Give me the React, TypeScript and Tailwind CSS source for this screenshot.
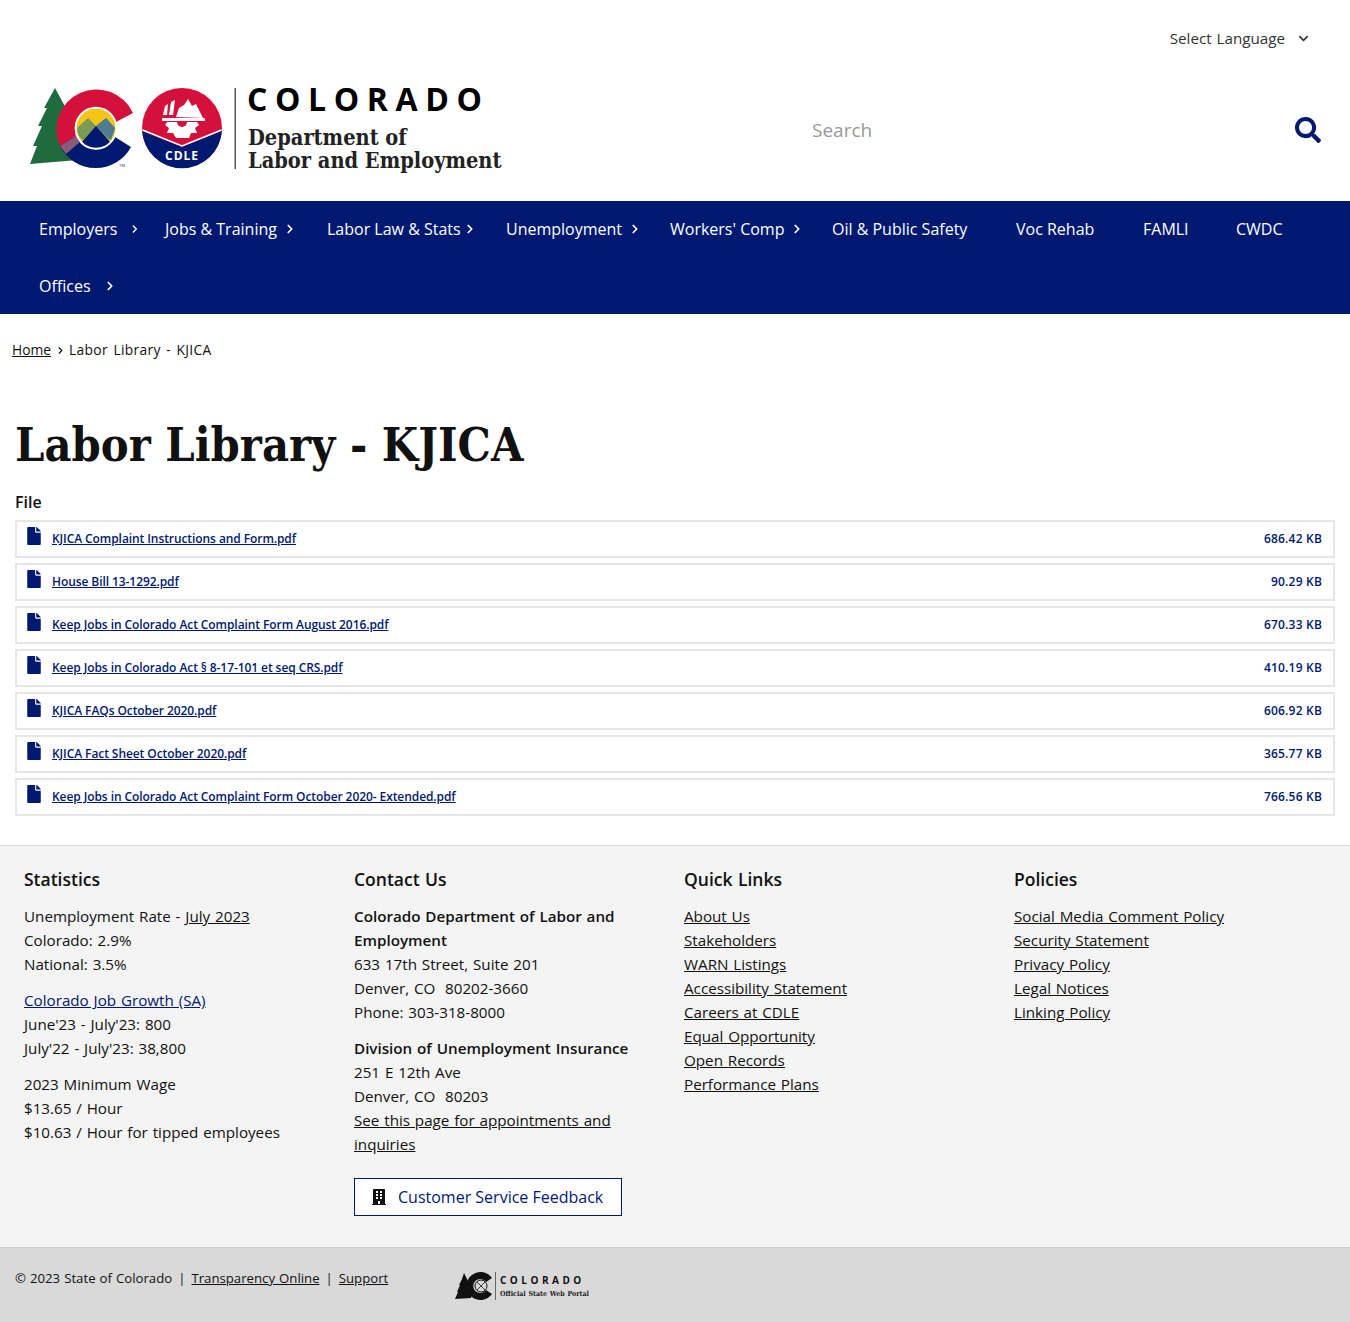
import { ChevronDown, ChevronRight } from 'lucide-react';
import { FaBuilding, FaFile, FaSearch } from 'react-icons/fa';

const navItems = [
  { label: 'Employers', width: 'w-[126px]', gap: 'ml-[12px]', arrow: true },
  { label: 'Jobs & Training', width: 'w-[162px]', gap: 'ml-[6px]', arrow: true },
  { label: 'Labor Law & Stats', width: 'w-[179px]', gap: 'ml-[2px]', arrow: true },
  { label: 'Unemployment', width: 'w-[164px]', gap: 'ml-[6px]', arrow: true },
  { label: "Workers' Comp", width: 'w-[162px]', gap: 'ml-[6px]', arrow: true },
  { label: 'Oil & Public Safety', width: 'w-[184px]', gap: '', arrow: false },
  { label: 'Voc Rehab', width: 'w-[127px]', gap: '', arrow: false },
  { label: 'FAMLI', width: 'w-[93px]', gap: '', arrow: false },
  { label: 'CWDC', width: 'w-[98px]', gap: '', arrow: false },
  { label: 'Offices', width: 'w-[126px]', gap: 'ml-[12px]', arrow: true },
];

const files = [
  { name: 'KJICA Complaint Instructions and Form.pdf', size: '686.42 KB' },
  { name: 'House Bill 13-1292.pdf', size: '90.29 KB' },
  { name: 'Keep Jobs in Colorado Act Complaint Form August 2016.pdf', size: '670.33 KB' },
  { name: 'Keep Jobs in Colorado Act § 8-17-101 et seq CRS.pdf', size: '410.19 KB' },
  { name: 'KJICA FAQs October 2020.pdf', size: '606.92 KB' },
  { name: 'KJICA Fact Sheet October 2020.pdf', size: '365.77 KB' },
  { name: 'Keep Jobs in Colorado Act Complaint Form October 2020- Extended.pdf', size: '766.56 KB' },
];

const quickLinks = [
  'About Us',
  'Stakeholders',
  'WARN Listings',
  'Accessibility Statement',
  'Careers at CDLE',
  'Equal Opportunity',
  'Open Records',
  'Performance Plans',
];

const policies = [
  'Social Media Comment Policy',
  'Security Statement',
  'Privacy Policy',
  'Legal Notices',
  'Linking Policy',
];

function Logo() {
  return (
    <svg width="520" height="120" viewBox="0 70 520 120" className="block">
      {/* state C and tree */}
      <path d="M55 88 L68 112 L62 112 L74 136 L78 160 L30 164 L37 146 L33 146 L42 126 L38 126 L47 108 L44 108 Z" fill="#1f6b3f" />
      <path d="M133 113 A40 40 0 1 0 60 146 L76 136 A21 21 0 1 1 116 122 Z" fill="#d5103a" />
      <path d="M60 146 A40 40 0 0 0 131 147 L115 137 A21 21 0 0 1 76 136 Z" fill="#001970" />
      <path d="M60 146 L76 136 L80 142 L66 154 Z" fill="#8a5a78" />
      <circle cx="96" cy="128" r="19.5" fill="#f6c51a" />
      <path d="M77 128 L88 118 L96 126 L106 118 L115 128 A19.5 19.5 0 0 1 78 134 Z" fill="#7b9a55" />
      <path d="M96 126 L106 118 L115 128 L111 140 Z" fill="#4f7b93" />
      <path d="M82 142 L96 126 L110 142 A19.5 19.5 0 0 1 82 142 Z" fill="#001970" />
      <circle cx="96" cy="128" r="20.5" fill="none" stroke="#fff" strokeWidth="1.6" />
      <text x="119" y="167" fontSize="4" fontFamily="Liberation Sans, sans-serif" fill="#333">TM</text>
      {/* CDLE badge */}
      <circle cx="182" cy="128" r="40" fill="#d5103a" />
      <path d="M142.1 131 L182 147 L221.9 131 A40 40 0 0 1 142.1 131 Z" fill="#001970" />
      <path d="M142.5 130 L182 146 L221.5 130" fill="none" stroke="#fff" strokeWidth="1.6" />
      <path d="M163 115 L165 106 L168 104 L167 115 Z M169 115 L171 102 L175 100 L173 115 Z" fill="#fff" />
      <path d="M176 117 L179 108 L184 105 L188 99 L192 106 L196 104 L203 118 Z" fill="#fff" />
      <rect x="162" y="118" width="43" height="3" rx="1" fill="#fff" />
      <path d="M167 122 L197 122 L199 125 L195 128 L197 133 L191 133 L189 138 L176 138 L173 133 L167 133 L169 128 L165 125 Z" fill="#fff" />
      <path d="M177 122 A5 5 0 0 0 187 122 Z" fill="#d5103a" />
      <text x="182" y="160" textAnchor="middle" fontSize="12" fontWeight="700" letterSpacing="1" fontFamily="Open Sans, sans-serif" fill="#fff">CDLE</text>
      {/* wordmark */}
      <rect x="234.5" y="88" width="1.5" height="81" fill="#555" />
      <text x="247" y="111" fontSize="32" fontWeight="700" letterSpacing="7.6" fontFamily="Open Sans, sans-serif" fill="#000">COLORADO</text>
      <text x="248" y="145" fontSize="21.6" fontWeight="700" fontFamily="DejaVu Serif Condensed, DejaVu Serif, serif" fill="#222">Department of</text>
      <text x="248" y="168" fontSize="21.6" fontWeight="700" fontFamily="DejaVu Serif Condensed, DejaVu Serif, serif" fill="#222">Labor and Employment</text>
    </svg>
  );
}

function PortalLogo() {
  return (
    <svg width="140" height="36" viewBox="0 0 140 36" className="block">
      <path d="M10 3 L15 13 L13 13 L18 24 L17 28 L1 29 L4 22 L3 22 L6 15 L5 15 L8 9 Z" fill="#111" />
      <path d="M38 8 A14 14 0 1 0 38 24 L32 20 A7 7 0 1 1 32 12 Z" fill="#111" />
      <circle cx="27" cy="16" r="6" fill="none" stroke="#111" strokeWidth="1" />
      <path d="M23 12 L31 20 M31 12 L23 20" stroke="#111" strokeWidth="0.8" />
      <rect x="41" y="2" width="1" height="28" fill="#666" />
      <text x="46" y="14" fontSize="10" fontWeight="700" letterSpacing="3.5" fontFamily="Open Sans, sans-serif" fill="#111">COLORADO</text>
      <text x="46" y="26" fontSize="7" fontWeight="700" fontFamily="DejaVu Serif Condensed, DejaVu Serif, serif" fill="#222">Official State Web Portal</text>
    </svg>
  );
}

export default function App() {
  return (
    <div className="font-['Open_Sans',sans-serif] text-[16px] text-[#111] bg-white">
      <header>
        <div className="h-[70px] flex justify-end pt-[26px] pr-[39px]">
          <div className="flex items-start gap-[11px] text-[#333] leading-[24px] text-[15.2px] [word-spacing:1px]">
            <span>Select Language</span>
            <ChevronDown className="w-[15px] h-[15px] mt-[5px]" strokeWidth={2.5} />
          </div>
        </div>
        <div className="h-[131px] flex items-start justify-between pr-[29px]">
          <Logo />
          <div className="flex items-center w-[509px] h-[120px] justify-between">
            <span className="text-[19px] text-[#999]">Search</span>
            <FaSearch className="w-[26px] h-[26px] text-[#001970]" />
          </div>
        </div>
      </header>

      <nav className="bg-[#001970] h-[113px] pl-[15px] flex flex-wrap text-white">
        {navItems.map((item) => (
          <div key={item.label} className={`${item.width} h-[56.5px] pl-[24px] flex items-center`}>
            <span className="leading-[24px]">{item.label}</span>
            {item.arrow && <ChevronRight className={`${item.gap} w-[14px] h-[14px]`} strokeWidth={3} />}
          </div>
        ))}
      </nav>

      <main className="pb-[29px]">
        <div className="h-[72px] pt-[24px] pl-[12px] flex items-start text-[13.8px] leading-[24px]">
          <a className="underline">Home</a>
          <ChevronRight className="w-[11px] h-[11px] ml-[4px] mr-[3px] mt-[7px]" strokeWidth={2.5} />
          <span className="tracking-[0.35px] [word-spacing:1.5px]">Labor Library - KJICA</span>
        </div>
        <h1 className="pl-[15px] font-['DejaVu_Serif_Condensed','DejaVu_Serif',serif] font-bold text-[46.5px] leading-[60px] mt-[29px] text-[#111]">
          Labor Library - KJICA
        </h1>
        <div className="pl-[15px] mt-[15px] font-semibold leading-[24px]">File</div>
        <div className="mx-[15px] mt-[6px] flex flex-col gap-[5px]">
          {files.map((file) => (
            <div
              key={file.name}
              className="h-[38px] border-2 border-[#e6e6e6] flex items-center justify-between pl-[10px] pr-[11px] text-[12px] font-semibold text-[#001970]"
            >
              <div className="flex items-center">
                <FaFile className="w-[14px] h-[18px] mb-[6px]" />
                <a className="underline ml-[11px] tracking-[-0.08px]">{file.name}</a>
              </div>
              <span className="tracking-[0.2px]">{file.size}</span>
            </div>
          ))}
        </div>
      </main>

      <footer>
        <div className="bg-[#f4f4f4] border-t border-[#dcdcdc] h-[402px] pl-[24px] pt-[21px] grid grid-cols-[330px_330px_330px_330px] leading-[24px] text-[15.2px] [word-spacing:0.9px]">
          <div>
            <h2 className="text-[17.5px] font-semibold mb-[13px]">Statistics</h2>
            <p>Unemployment Rate - <a className="underline">July 2023</a></p>
            <p>Colorado: 2.9%</p>
            <p>National: 3.5%</p>
            <p className="mt-[12px]"><a className="underline text-[#001970]">Colorado Job Growth (SA)</a></p>
            <p>June'23 - July'23: 800</p>
            <p>July'22 - July'23: 38,800</p>
            <p className="mt-[12px]">2023 Minimum Wage</p>
            <p>$13.65 / Hour</p>
            <p>$10.63 / Hour for tipped employees</p>
          </div>
          <div>
            <h2 className="text-[17.5px] font-semibold mb-[13px]">Contact Us</h2>
            <p className="font-semibold w-[290px]">Colorado Department of Labor and Employment</p>
            <p>633 17th Street, Suite 201</p>
            <p>Denver, CO&nbsp; 80202-3660</p>
            <p>Phone: 303-318-8000</p>
            <p className="font-semibold mt-[12px]">Division of Unemployment Insurance</p>
            <p>251 E 12th Ave</p>
            <p>Denver, CO&nbsp; 80203</p>
            <p className="w-[290px]"><a className="underline">See this page for appointments and inquiries</a></p>
            <a className="mt-[22px] w-[268px] h-[38px] border border-[#001970] bg-white flex items-center pl-[17px] text-[#001970] text-[16px] [word-spacing:0]">
              <FaBuilding className="w-[14px] h-[16px] text-[#111] mr-[12px]" />
              Customer Service Feedback
            </a>
          </div>
          <div>
            <h2 className="text-[17.5px] font-semibold mb-[13px]">Quick Links</h2>
            {quickLinks.map((link) => (
              <p key={link}><a className="underline">{link}</a></p>
            ))}
          </div>
          <div>
            <h2 className="text-[17.5px] font-semibold mb-[13px]">Policies</h2>
            {policies.map((link) => (
              <p key={link}><a className="underline">{link}</a></p>
            ))}
          </div>
        </div>
        <div className="bg-[#d9d9d9] border-t border-[#cfcfcf] h-[75px] pl-[15px] flex items-start text-[13.2px] leading-[24px] [word-spacing:0.6px]">
          <p className="mt-[18px] w-[438px]">
            © 2023 State of Colorado<span className="mx-[6px]">|</span><a className="underline">Transparency Online</a><span className="mx-[6px]">|</span><a className="underline">Support</a>
          </p>
          <div className="mt-[22px] ml-[1px]">
            <PortalLogo />
          </div>
        </div>
      </footer>
    </div>
  );
}
